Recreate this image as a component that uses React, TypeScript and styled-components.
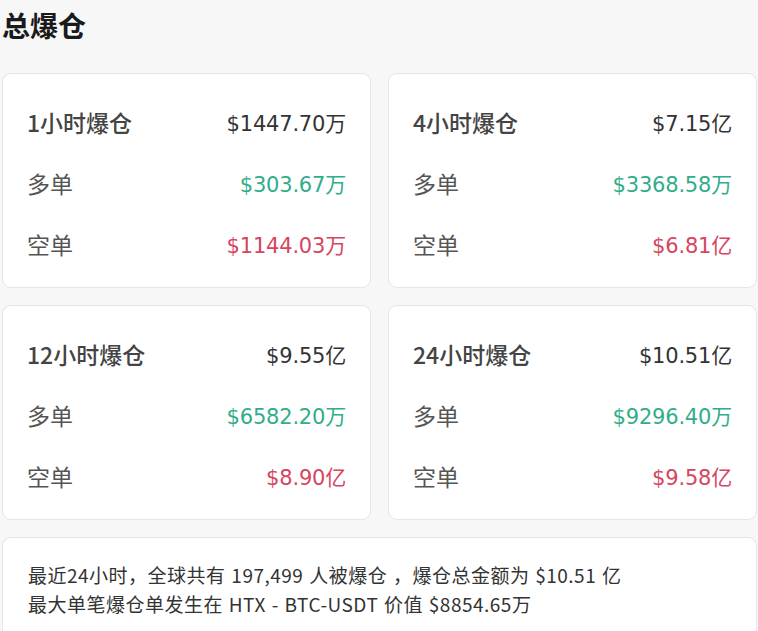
import styled, { createGlobalStyle } from "styled-components";

type Stat = { title: string; total: string; long: string; short: string };

const GlobalStyle = createGlobalStyle`
body {
    margin: 0;
    background: #f7f7f7;
    font-family: "Noto Sans CJK SC", "Noto Sans", sans-serif;
}
`

const Page = styled.div`
width: 758px;
padding: 0 1px 0 2px;
box-sizing: border-box;
`

const Heading = styled.h2`
margin: 0;
padding-top: 6px;
height: 73px;
box-sizing: border-box;
font-size: 28px;
font-weight: 700;
color: #1a1a1a;
line-height: 38px;
`

const Grid = styled.div`
display: grid;
grid-template-columns: 1fr 1fr;
gap: 17px;
`

const Card = styled.div`
background: #fff;
border: 1px solid #e6e6e6;
border-radius: 9px;
height: 215px;
box-sizing: border-box;
padding: 17px 24px 0 24px;
display: flex;
flex-direction: column;
`

const Row = styled.div`
display: flex;
justify-content: space-between;
align-items: center;
height: 61px;
`

const Label = styled.span<{ $head?: boolean }>`
font-size: 23px;
color: ${p => (p.$head ? "#444" : "#555")};
font-weight: ${p => (p.$head ? 500 : 400)};
`

const Value = styled.span<{ $tone: "dark" | "up" | "down" }>`
font-family: "DejaVu Sans", "Noto Sans CJK SC", sans-serif;
font-size: 21px;
letter-spacing: -0.2px;
color: ${p => (p.$tone === "up" ? "#32ad8a" : p.$tone === "down" ? "#d6455e" : "#333")};
`

const Summary = styled.div`
margin-top: 17px;
background: #fff;
border: 1px solid #e6e6e6;
border-radius: 9px;
padding: 22px 24px 20px 25px;
font-size: 19px;
line-height: 29px;
color: #333;
letter-spacing: 0.5px;
word-spacing: 1px;
`

const stats: Stat[] = [
    { title: "1小时爆仓", total: "$1447.70万", long: "$303.67万", short: "$1144.03万" },
    { title: "4小时爆仓", total: "$7.15亿", long: "$3368.58万", short: "$6.81亿" },
    { title: "12小时爆仓", total: "$9.55亿", long: "$6582.20万", short: "$8.90亿" },
    { title: "24小时爆仓", total: "$10.51亿", long: "$9296.40万", short: "$9.58亿" },
];

function App() {
    return (
        <Page>
            <GlobalStyle />
            <Heading>总爆仓</Heading>
            <Grid>
                {stats.map((s) => (
                    <Card key={s.title}>
                        <Row>
                            <Label $head>{s.title}</Label>
                            <Value $tone="dark">{s.total}</Value>
                        </Row>
                        <Row>
                            <Label>多单</Label>
                            <Value $tone="up">{s.long}</Value>
                        </Row>
                        <Row>
                            <Label>空单</Label>
                            <Value $tone="down">{s.short}</Value>
                        </Row>
                    </Card>
                ))}
            </Grid>
            <Summary>
                <div>最近24小时，全球共有 197,499 人被爆仓 ，爆仓总金额为 $10.51 亿</div>
                <div>最大单笔爆仓单发生在 HTX - BTC-USDT 价值 $8854.65万</div>
            </Summary>
        </Page>
    );
}

export default App;
